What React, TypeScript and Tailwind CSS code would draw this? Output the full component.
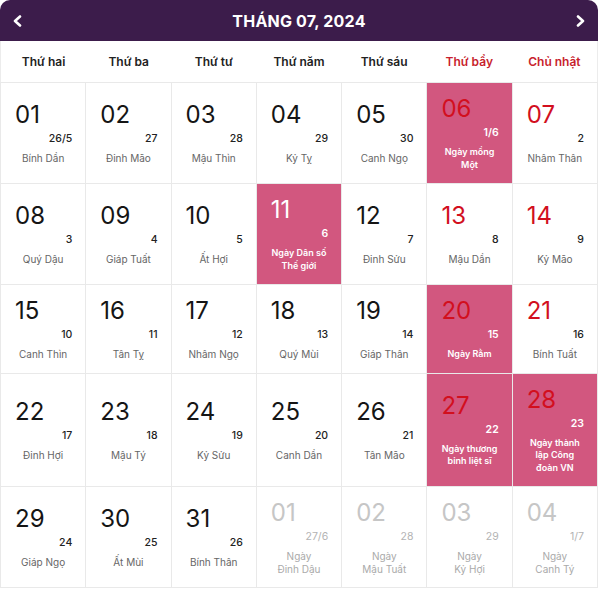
import React from "react";

type Cell = {
  d: string;
  l: string;
  n?: string;
  ev?: string[];
  other?: string[];
};

const weeks: Cell[][] = [
  [
    { d: "01", l: "26/5", n: "Bính Dần" },
    { d: "02", l: "27", n: "Đinh Mão" },
    { d: "03", l: "28", n: "Mậu Thìn" },
    { d: "04", l: "29", n: "Kỷ Tỵ" },
    { d: "05", l: "30", n: "Canh Ngọ" },
    { d: "06", l: "1/6", ev: ["Ngày mồng", "Một"] },
    { d: "07", l: "2", n: "Nhâm Thân" },
  ],
  [
    { d: "08", l: "3", n: "Quý Dậu" },
    { d: "09", l: "4", n: "Giáp Tuất" },
    { d: "10", l: "5", n: "Ất Hợi" },
    { d: "11", l: "6", ev: ["Ngày Dân số", "Thế giới"] },
    { d: "12", l: "7", n: "Đinh Sửu" },
    { d: "13", l: "8", n: "Mậu Dần" },
    { d: "14", l: "9", n: "Kỷ Mão" },
  ],
  [
    { d: "15", l: "10", n: "Canh Thìn" },
    { d: "16", l: "11", n: "Tân Tỵ" },
    { d: "17", l: "12", n: "Nhâm Ngọ" },
    { d: "18", l: "13", n: "Quý Mùi" },
    { d: "19", l: "14", n: "Giáp Thân" },
    { d: "20", l: "15", ev: ["Ngày Rằm"] },
    { d: "21", l: "16", n: "Bính Tuất" },
  ],
  [
    { d: "22", l: "17", n: "Đinh Hợi" },
    { d: "23", l: "18", n: "Mậu Tý" },
    { d: "24", l: "19", n: "Kỷ Sửu" },
    { d: "25", l: "20", n: "Canh Dần" },
    { d: "26", l: "21", n: "Tân Mão" },
    { d: "27", l: "22", ev: ["Ngày thương", "binh liệt sĩ"] },
    { d: "28", l: "23", ev: ["Ngày thành", "lập Công", "đoàn VN"] },
  ],
  [
    { d: "29", l: "24", n: "Giáp Ngọ" },
    { d: "30", l: "25", n: "Ất Mùi" },
    { d: "31", l: "26", n: "Bính Thân" },
    { d: "01", l: "27/6", other: ["Ngày", "Đinh Dậu"] },
    { d: "02", l: "28", other: ["Ngày", "Mậu Tuất"] },
    { d: "03", l: "29", other: ["Ngày", "Kỷ Hợi"] },
    { d: "04", l: "1/7", other: ["Ngày", "Canh Tý"] },
  ],
];

const days = ["Thứ hai", "Thứ ba", "Thứ tư", "Thứ năm", "Thứ sáu", "Thứ bẩy", "Chủ nhật"];

function DayCell({ c, col }: { c: Cell; col: number }) {
  const pink = !!c.ev;
  const other = !!c.other;
  const weekend = col >= 5;
  let numColor = "text-[#151515]";
  if (other) numColor = "text-[#c6c6c6]";
  else if (pink && !weekend) numColor = "text-white";
  else if (weekend) numColor = "text-[#d20f1e]";

  return (
    <div
      className={
        "flex flex-col justify-center border-r border-b border-[#e9e9e9] py-[12px] " +
        (pink ? "bg-[#d2577f]" : "bg-white")
      }
    >
      <div className={"pl-[14px] text-[24px] leading-[28px] " + numColor}>{c.d}</div>
      <div
        className={
          "mt-[3px] pr-[13px] text-right text-[10.5px] leading-[14px] " +
          (pink
            ? "text-white font-semibold"
            : other
            ? "text-[#b3b3b3]"
            : "text-[#222] font-medium")
        }
      >
        {c.l}
      </div>
      <div
        className={
          "mt-[6px] px-[4px] text-center leading-[12.5px] " +
          (pink
            ? "text-white font-semibold text-[9px]"
            : other
            ? "text-[#aaaaaa] text-[10px]"
            : "text-[#666] text-[10px]")
        }
      >
        {c.ev
          ? c.ev.map((t, i) => <div key={i}>{t}</div>)
          : c.other
          ? c.other.map((t, i) => <div key={i}>{t}</div>)
          : c.n}
      </div>
    </div>
  );
}

export default function App() {
  return (
    <div className="w-[600px] h-[591px] bg-white font-['Inter',sans-serif]">
      <div className="w-[598px]">
        <div className="flex h-[41px] items-center justify-between rounded-t-[10px] bg-[#3c1c4b] px-[13px] text-white">
          <svg width="9" height="12" viewBox="0 0 9 12" fill="none">
            <polyline
              points="7,1.5 2,6 7,10.5"
              stroke="white"
              strokeWidth="2.6"
              strokeLinecap="round"
              strokeLinejoin="round"
            />
          </svg>
          <div className="text-[16px] font-bold tracking-[0.2px]">THÁNG 07, 2024</div>
          <svg width="9" height="12" viewBox="0 0 9 12" fill="none">
            <polyline
              points="2,1.5 7,6 2,10.5"
              stroke="white"
              strokeWidth="2.6"
              strokeLinecap="round"
              strokeLinejoin="round"
            />
          </svg>
        </div>
        <div className="grid h-[41px] grid-cols-7 border-x border-[#ececec]">
          {days.map((d, i) => (
            <div
              key={d}
              className={
                "flex items-center justify-center text-[12px] font-semibold " +
                (i >= 5 ? "text-[#c81f2e]" : "text-[#222]")
              }
            >
              {d}
            </div>
          ))}
        </div>
        <div className="grid grid-cols-7 border-l border-t border-[#e9e9e9]">
          {weeks.map((w, wi) =>
            w.map((c, ci) => <DayCell key={wi + "-" + ci} c={c} col={ci} />)
          )}
        </div>
      </div>
    </div>
  );
}
